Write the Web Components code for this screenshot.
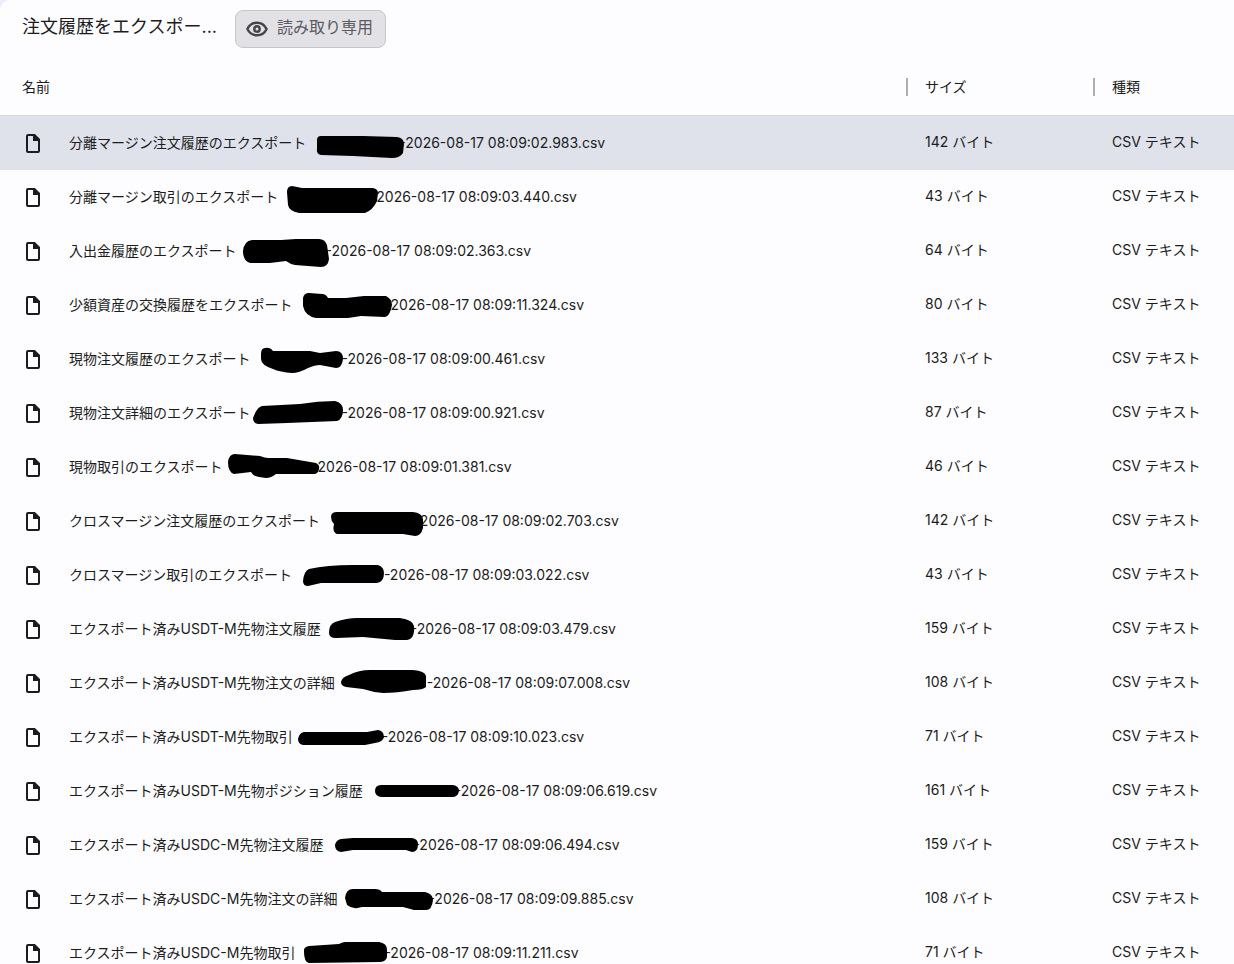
<!DOCTYPE html>
<html lang="ja">
<head>
<meta charset="utf-8">
<meta name="viewport" content="width=device-width, initial-scale=1">
<title>注文履歴をエクスポート</title>
<style>
  body {
    margin: 0;
    background: #e8effa;
    color: #1b1c20;
    font: 14px/20px Inter, "Noto Sans CJK JP", sans-serif;
  }
</style>
</head>
<body>
<file-pane>
  <pane-header slot="header">注文履歴をエクスポー...
    <mode-chip slot="chip">読み取り専用</mode-chip>
  </pane-header>
  <file-list></file-list>
</file-pane>

<script>
customElements.define('file-pane', class extends HTMLElement {
  connectedCallback() {
    const shadow = this.attachShadow({mode: 'open'});
    shadow.innerHTML = `
    <style>
      :host { display: block;
              height: 100vh;
              overflow: hidden;
              background: #fdfcff;
              border-top-left-radius: 10px; }
    </style>
    <slot name="header"></slot>
    <main><slot></slot></main>`;
  }
});

customElements.define('pane-header', class extends HTMLElement {
  connectedCallback() {
    const shadow = this.attachShadow({mode: 'open'});
    shadow.innerHTML = `
    <style>
      :host { display: block; }
      header { display: flex;
               align-items: flex-start;
               gap: 18px;
               padding: 10px 22px; }
      h1 { margin: 0;
           font-size: 18px;
           font-weight: 400;
           line-height: 34px;
           white-space: nowrap; }
    </style>
    <header>
      <h1><slot></slot></h1>
      <slot name="chip"></slot>
    </header>`;
  }
});

customElements.define('mode-chip', class extends HTMLElement {
  connectedCallback() {
    const shadow = this.attachShadow({mode: 'open'});
    shadow.innerHTML = `
    <style>
      :host { display: block; }
      button { display: flex;
               align-items: flex-start;
               gap: 8px;
               height: 38px;
               padding: 6px 12px 0 9px;
               box-sizing: border-box;
               border: 1px solid #c5c5ca;
               border-radius: 8px;
               background: #e2e1e6;
               color: #5b5c61;
               font: inherit;
               font-size: 16px;
               white-space: nowrap; }
      svg { width: 24px;
            height: 24px; }
    </style>
    <button type="button">
      <svg viewBox="0 0 24 24" fill="none" stroke="#43464b" stroke-width="2.4" aria-hidden="true">
        <path d="M2.4 12C4.2 8.2 7.7 5.7 12 5.7S19.8 8.2 21.6 12C19.8 15.8 16.3 18.3 12 18.3S4.2 15.8 2.4 12Z"/>
        <circle cx="12" cy="12" r="2.7"/>
      </svg>
      <span><slot></slot></span>
    </button>`;
  }
});

customElements.define('file-icon', class extends HTMLElement {
  connectedCallback() {
    const shadow = this.attachShadow({mode: 'open'});
    shadow.innerHTML = `
    <style>
      :host { display: block; }
      svg { display: block;
            width: 14px;
            height: 19px; }
    </style>
    <svg viewBox="0 0 14 19" aria-hidden="true">
      <path d="M2 1H8.5L13 5.5V17Q13 18 12 18H2Q1 18 1 17V2Q1 1 2 1Z" fill="none" stroke="#1b1c20" stroke-width="2"/>
      <path d="M7 1H9L13.5 5.5V7H7Z" fill="#1b1c20"/>
    </svg>`;
  }
});

// black marker stroke over the account number
customElements.define('marker-stroke', class extends HTMLElement {
  connectedCallback() {
    const width = this.getAttribute('width');
    const shadow = this.attachShadow({mode: 'open'});
    shadow.innerHTML = `
    <style>
      :host { display: block;
              position: relative; }
      svg { display: block;
            overflow: visible; }
    </style>
    <svg width="${width}" height="28" viewBox="0 0 ${width} 28" aria-hidden="true">
      <path d="${this.getAttribute('path')}"/>
    </svg>`;
  }
});

// name, time, size, marker width, marker path
const files = [
  ['分離マージン注文履歴のエクスポート', '-2026-08-17 08:09:02.983.csv', '142 バイト', 93,
   'M11 11Q11 7 15 7L57 7L91 8Q98 9 98 15L97 24Q94 29 86 29L47 27L15 26Q10 25 11 19Z'],
  ['分離マージン取引のエクスポート', '-2026-08-17 08:09:03.440.csv', '43 バイト', 92,
   'M9 9Q9 3 14 3L24 5L95 5Q100 6 100 10L99 18Q95 27 87 30L21 30Q11 28 10 22Z'],
  ['入出金履歴のエクスポート', '-2026-08-17 08:09:02.363.csv', '64 バイト', 89,
   'M6 14Q7 4 15 3L44 3L59 2L82 2Q88 2 90 8L92 22Q91 30 84 30L58 28Q53 27 49 24L33 26L13 26Q6 24 6 14Z'],
  ['少額資産の交換履歴をエクスポート', '-2026-08-17 08:09:11.324.csv', '80 バイト', 92,
   'M10 7Q11 2 16 2L29 3Q33 3 35 7L53 7L71 5L93 5Q99 8 99 14Q97 25 92 26L68 25L55 27L23 27Q12 25 10 15Z'],
  ['現物注文履歴のエクスポート', '-2026-08-17 08:09:00.461.csv', '133 バイト', 91,
   'M10 9Q10 3 14 3Q19 2 22 6L59 6L69 8L85 6Q92 6 92 14Q91 23 85 23L69 20Q64 20 57 23Q48 28 41 28Q29 27 22 24Q10 20 10 14Z'],
  ['現物注文詳細のエクスポート', '-2026-08-17 08:09:00.921.csv', '87 バイト', 91,
   'M2 19Q6 8 11 7L49 5Q67 2 84 2Q92 4 92 11Q92 20 86 22L36 24L7 25Q2 24 2 19Z'],
  ['現物取引のエクスポート', '-2026-08-17 08:09:01.381.csv', '46 バイト', 89,
   'M5 9Q6 1 12 1L37 3Q42 5 45 5L64 5L93 10Q97 12 96 16Q95 21 91 21L53 21Q48 25 43 25L36 24Q30 23 28 19L11 21Q5 19 5 9Z'],
  ['クロスマージン注文履歴のエクスポート', '-2026-08-17 08:09:02.703.csv', '142 バイト', 94,
   'M11 10Q11 5 17 5L93 5Q102 6 103 12L103 21Q101 29 95 29L83 27L17 27Q12 25 14 17Q11 14 11 10Z'],
  ['クロスマージン取引のエクスポート', '-2026-08-17 08:09:03.022.csv', '43 バイト', 92,
   'M11 20Q12 10 17 8Q35 4 61 4L86 4Q92 6 92 12Q92 21 85 22L29 22L16 25Q11 25 11 20Z'],
  ['エクスポート済みUSDT-M先物注文履歴', '-2026-08-17 08:09:03.479.csv', '159 バイト', 90,
   'M8 18Q8 9 14 7Q26 3 36 3L79 3Q92 5 93 11Q94 24 86 25L74 25L42 22L15 23Q8 23 8 18Z'],
  ['エクスポート済みUSDT-M先物注文の詳細', '-2026-08-17 08:09:07.008.csv', '108 バイト', 92,
   'M6 13Q7 8 14 6Q24 1 35 1L78 1Q90 2 91 7L91 18Q88 21 78 21Q62 24 48 24Q37 23 28 20L11 18Q6 17 6 13Z'],
  ['エクスポート済みUSDT-M先物取引', '-2026-08-17 08:09:10.023.csv', '71 バイト', 89,
   'M5 16Q6 10 11 9L74 9L85 7Q91 8 91 14Q90 19 82 20L72 22L10 22Q5 21 5 16Z'],
  ['エクスポート済みUSDT-M先物ポジション履歴', '-2026-08-17 08:09:06.619.csv', '161 バイト', 92,
   'M12 14Q12 8 18 8L90 8Q96 9 96 14Q95 20 89 20L18 20Q12 19 12 14Z'],
  ['エクスポート済みUSDC-M先物注文履歴', '-2026-08-17 08:09:06.494.csv', '159 バイト', 90,
   'M12 14Q13 9 18 8L30 7L89 7Q95 8 95 13Q95 21 89 21L83 19L30 19L18 21Q12 20 12 14Z'],
  ['エクスポート済みUSDC-M先物注文の詳細', '-2026-08-17 08:09:09.885.csv', '108 バイト', 91,
   'M8 13Q9 4 16 4L38 4Q43 4 45 7L88 7Q96 9 96 15Q95 25 89 25L77 25L66 22L25 22Q16 25 10 20Z'],
  ['エクスポート済みUSDC-M先物取引', '-2026-08-17 08:09:11.211.csv', '71 バイト', 89,
   'M9 13Q8 8 14 7L44 5Q48 3 50 3L84 3Q92 4 92 11L92 18Q91 23 84 23L14 24Q9 23 9 13Z'],
];

customElements.define('file-list', class extends HTMLElement {
  connectedCallback() {
    const shadow = this.attachShadow({mode: 'open'});
    shadow.innerHTML = `
    <style>
      :host { display: block; }
      table { width: 100%;
              border-collapse: separate;
              border-spacing: 0;
              table-layout: fixed; }
      th, td { padding: 0;
               font-weight: 400;
               text-align: left;
               white-space: nowrap; }
      th { height: 57px;
           border-bottom: 1px solid #d9dae0; }
      td { height: 54px; }
      .size { width: 187px; }
      .kind { width: 141px; }
      th:first-child { padding-left: 22px; }
      th span { display: block;
                line-height: 18px; }
      th + th span { border-left: 2px solid #aeafb5;
                     padding-left: 17px; }
      td + td { padding: 0 0 2px 19px;
                height: 52px; }
      .file { display: flex;
              align-items: center;
              padding-left: 26px; }
      .name { padding-left: 29px; }
      .selected td { background: #dfe2eb; }
    </style>
    <table>
      <thead>
        <tr>
          <th scope="col"><span>名前</span></th>
          <th scope="col" class="size"><span>サイズ</span></th>
          <th scope="col" class="kind"><span>種類</span></th>
        </tr>
      </thead>
      <tbody>
      ${files.map(([name, time, size, width, path], i) => `
        <tr${i === 0 ? ' class="selected"' : ''}>
          <td><div class="file">
            <file-icon></file-icon>
            <span class="name">${name}</span>
            <marker-stroke width="${width}" path="${path}"></marker-stroke>
            <span class="time">${time}</span>
          </div></td>
          <td>${size}</td>
          <td>CSV テキスト</td>
        </tr>`).join('')}
      </tbody>
    </table>`;
  }
});
</script>
</body>
</html>
